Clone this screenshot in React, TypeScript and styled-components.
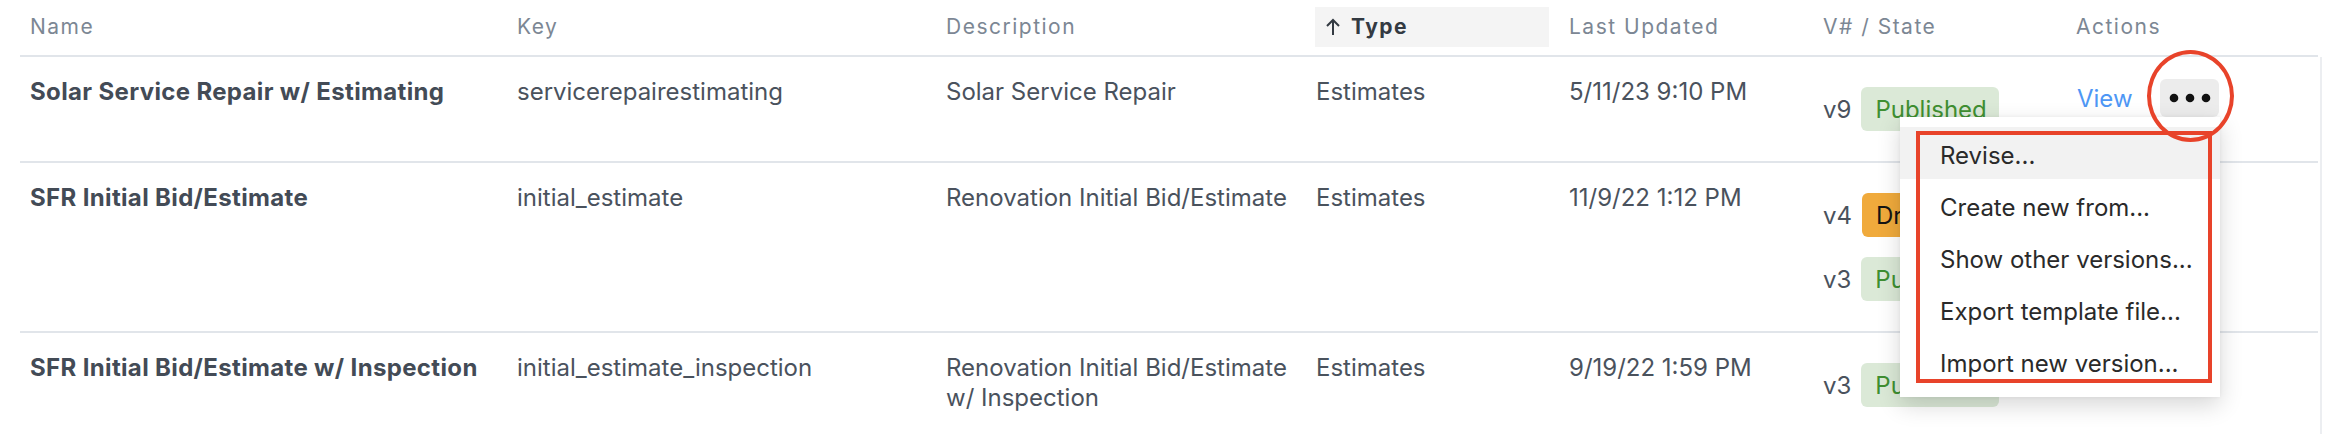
import React from "react";
import styled, { createGlobalStyle } from "styled-components";

const Global = createGlobalStyle`
  html, body { margin: 0; padding: 0; background: #ffffff; }
  body { font-family: Inter, "Noto Sans", "Liberation Sans", sans-serif; -webkit-font-smoothing: antialiased; }
  * { box-sizing: border-box; }
`;

const COLS = "487px 429px 370px 253px 254px 253px 252px";

const Page = styled.div`
  position: relative;
  width: 2326px;
  height: 434px;
  overflow: hidden;
  padding-left: 20px;
`;

const Table = styled.div`
  width: 2302px;
`;

const HeaderRow = styled.div`
  display: grid;
  grid-template-columns: ${COLS};
  height: 57px;
  align-items: center;
  border-bottom: 2px solid #e1e5ea;
  width: 2298px;
  padding-bottom: 2px;
`;

const HeadCell = styled.div`
  padding: 0 10px;
  font-size: 21px;
  letter-spacing: 1.5px;
  color: #7c8794;
`;

const SortButton = styled.div`
  display: flex;
  align-items: center;
  gap: 10px;
  width: 234px;
  height: 40px;
  margin-left: -1px;
  padding: 0 10px;
  background: #f4f4f4;
  color: #333a42;
  font-weight: 700;
  font-size: 21px;
  letter-spacing: 1.5px;
`;

const Body = styled.div`
  border-right: 2px solid #eceef1;
  width: 2302px;
`;

const Row = styled.div`
  display: grid;
  grid-template-columns: ${COLS};
  width: 2298px;
  border-bottom: 2px solid #e1e5ea;
  &:last-child { border-bottom: none; }
`;

const Cell = styled.div<{ $bold?: boolean }>`
  padding: 20px 10px 0;
  font-size: 24px;
  line-height: 30px;
  color: ${(p) => (p.$bold ? "#434b56" : "#4a525d")};
  font-weight: ${(p) => (p.$bold ? 700 : 400)};
  letter-spacing: ${(p) => (p.$bold ? "0.35px" : "0")};
`;

const StateCell = styled.div`
  display: flex;
  flex-direction: column;
  gap: 20px;
  padding: 30px 10px 30px;
`;

const Version = styled.div`
  display: flex;
  align-items: baseline;
  gap: 10px;
  font-size: 24px;
  color: #4a525d;
`;

const Badge = styled.span<{ $kind: "published" | "draft" }>`
  display: inline-flex;
  align-items: center;
  height: 44px;
  width: 138px;
  padding: 0 14px;
  border-radius: 6px;
  font-size: 24px;
  white-space: nowrap;
  overflow: hidden;
  background: ${(p) => (p.$kind === "published" ? "#dbe9d7" : "#f0aa3c")};
  color: ${(p) => (p.$kind === "published" ? "#3f8f32" : "#141414")};
`;

const ActionsCell = styled.div`
  display: flex;
  align-items: center;
  align-self: start;
  gap: 20px;
  padding: 22px 10px 0 11px;
`;

const ViewLink = styled.a`
  font-size: 24px;
  color: #4e97f5;
  text-decoration: none;
  width: 63px;
`;

const DotsButton = styled.button`
  display: flex;
  align-items: center;
  justify-content: center;
  width: 59px;
  height: 38px;
  border: none;
  border-radius: 6px;
  background: #ececec;
  padding: 0;
`;

const Menu = styled.div`
  position: absolute;
  left: 1900px;
  top: 117px;
  width: 320px;
  height: 280px;
  padding-top: 10px;
  background: #ffffff;
  box-shadow: 0 8px 22px rgba(0, 0, 0, 0.16), 0 0 4px rgba(0, 0, 0, 0.05);
  z-index: 5;
`;

const MenuItem = styled.div<{ $active?: boolean }>`
  display: flex;
  align-items: center;
  height: 52px;
  padding: 4px 0 0 40px;
  font-size: 24px;
  color: #2a2a2a;
  white-space: nowrap;
  background: ${(p) => (p.$active ? "#f2f2f2" : "transparent")};
`;

const RedBox = styled.div`
  position: absolute;
  left: 1916px;
  top: 131px;
  width: 296px;
  height: 252px;
  border: 4px solid #e8432a;
  z-index: 6;
  pointer-events: none;
`;

const RedRing = styled.div`
  position: absolute;
  left: 2147px;
  top: 50px;
  width: 87px;
  height: 92px;
  border: 4px solid #e8432a;
  border-radius: 50%;
  z-index: 6;
  pointer-events: none;
`;

const Dots = () => (
  <svg width="44" height="12" viewBox="0 0 44 12">
    <circle cx="6" cy="6" r="4.3" fill="#111" />
    <circle cx="22" cy="6" r="4.3" fill="#111" />
    <circle cx="38" cy="6" r="4.3" fill="#111" />
  </svg>
);

const ArrowUp = () => (
  <svg width="16" height="20" viewBox="0 0 16 20">
    <path d="M8 18V3M2 9l6-6 6 6" stroke="#333a42" strokeWidth="2" fill="none" />
  </svg>
);

type V = { n: string; kind: "published" | "draft" };
type R = { name: string; key: string; desc: string; type: string; updated: string; versions: V[] };

const rows: R[] = [
  {
    name: "Solar Service Repair w/ Estimating",
    key: "servicerepairestimating",
    desc: "Solar Service Repair",
    type: "Estimates",
    updated: "5/11/23 9:10 PM",
    versions: [{ n: "v9", kind: "published" }],
  },
  {
    name: "SFR Initial Bid/Estimate",
    key: "initial_estimate",
    desc: "Renovation Initial Bid/Estimate",
    type: "Estimates",
    updated: "11/9/22 1:12 PM",
    versions: [
      { n: "v4", kind: "draft" },
      { n: "v3", kind: "published" },
    ],
  },
  {
    name: "SFR Initial Bid/Estimate w/ Inspection",
    key: "initial_estimate_inspection",
    desc: "Renovation Initial Bid/Estimate w/ Inspection",
    type: "Estimates",
    updated: "9/19/22 1:59 PM",
    versions: [{ n: "v3", kind: "published" }],
  },
];

const menuItems = [
  "Revise...",
  "Create new from...",
  "Show other versions...",
  "Export template file...",
  "Import new version...",
];

export default function App() {
  return (
    <>
      <Global />
      <Page>
        <Table>
          <HeaderRow>
            <HeadCell>Name</HeadCell>
            <HeadCell>Key</HeadCell>
            <HeadCell>Description</HeadCell>
            <HeadCell>
              <SortButton>
                <ArrowUp />
                Type
              </SortButton>
            </HeadCell>
            <HeadCell>Last Updated</HeadCell>
            <HeadCell>V# / State</HeadCell>
            <HeadCell>Actions</HeadCell>
          </HeaderRow>
          <Body>
            {rows.map((r) => (
              <Row key={r.key}>
                <Cell $bold>{r.name}</Cell>
                <Cell>{r.key}</Cell>
                <Cell>{r.desc}</Cell>
                <Cell>{r.type}</Cell>
                <Cell>{r.updated}</Cell>
                <StateCell>
                  {r.versions.map((v) => (
                    <Version key={v.n}>
                      <span>{v.n}</span>
                      <Badge $kind={v.kind}>{v.kind === "published" ? "Published" : "Draft"}</Badge>
                    </Version>
                  ))}
                </StateCell>
                <ActionsCell>
                  <ViewLink href="#">View</ViewLink>
                  <DotsButton aria-label="More actions">
                    <Dots />
                  </DotsButton>
                </ActionsCell>
              </Row>
            ))}
          </Body>
        </Table>
        <Menu>
          {menuItems.map((m, i) => (
            <MenuItem key={m} $active={i === 0}>
              {m}
            </MenuItem>
          ))}
        </Menu>
        <RedBox />
        <RedRing />
      </Page>
    </>
  );
}
